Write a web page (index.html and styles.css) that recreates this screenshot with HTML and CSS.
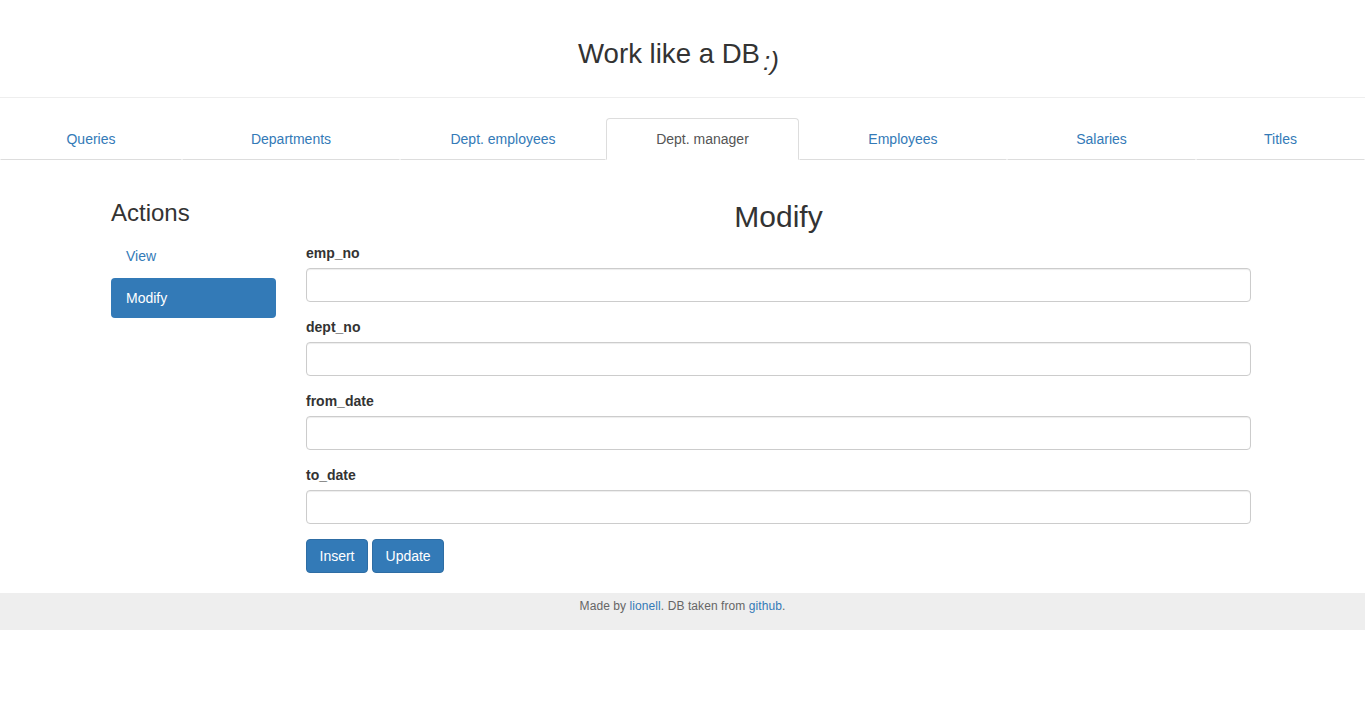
FILE: index.html
```html
<!DOCTYPE html>
<html lang="en">
<head>
<meta charset="utf-8">
<title>Work like a DB</title>
<link rel="stylesheet" href="styles.css">
</head>
<body>
<header class="page-header">
  <h1 class="title">Work like a DB<span class="smile">:)</span></h1>
</header>
<nav class="tabs">
  <a class="tab" href="#">Queries</a>
  <a class="tab" href="#">Departments</a>
  <a class="tab" href="#">Dept. employees</a>
  <a class="tab active" href="#">Dept. manager</a>
  <a class="tab" href="#">Employees</a>
  <a class="tab" href="#">Salaries</a>
  <a class="tab" href="#">Titles</a>
</nav>
<main class="container">
  <aside class="sidebar">
    <h3 class="side-title">Actions</h3>
    <ul class="pills">
      <li><a class="pill" href="#">View</a></li>
      <li><a class="pill active" href="#">Modify</a></li>
    </ul>
  </aside>
  <section class="content">
    <h2 class="content-title">Modify</h2>
    <form class="form">
      <div class="form-group">
        <label class="label">emp_no</label>
        <input class="input" type="text">
      </div>
      <div class="form-group">
        <label class="label">dept_no</label>
        <input class="input" type="text">
      </div>
      <div class="form-group">
        <label class="label">from_date</label>
        <input class="input" type="text">
      </div>
      <div class="form-group">
        <label class="label">to_date</label>
        <input class="input" type="text">
      </div>
      <div class="buttons">
        <button class="btn" type="button">Insert</button>
        <button class="btn" type="button">Update</button>
      </div>
    </form>
  </section>
</main>
<footer class="footer">
  <p class="footer-text">Made by <a href="#">lionell</a>. DB taken from <a href="#">github</a>.</p>
</footer>
</body>
</html>
```

FILE: styles.css
```css
* { box-sizing: border-box; }
html, body { margin: 0; padding: 0; }
body {
  font-family: "Liberation Sans", Arial, Helvetica, sans-serif;
  font-size: 14px;
  line-height: 1.42857;
  color: #333;
  background: #fff;
}
a { color: #337ab7; text-decoration: none; }

.page-header {
  padding: 38px 0 28px;
  border-bottom: 1px solid #eee;
  text-align: center;
}
.title {
  margin: 0;
  font-size: 27.6px;
  font-weight: 500;
  line-height: 31px;
  color: #333;
}
.smile {
  display: inline-block;
  font-size: 26px;
  font-style: italic;
  margin-left: 3px;
  margin-right: -6px;
  padding-right: 14px;
  position: relative;
  top: 7px;
  line-height: 1;
}

.tabs {
  margin-top: 20px;
  display: grid;
  grid-template-columns: 182px 218px 206px 193px 208px 189px 169px;
}
.tab {
  display: block;
  text-align: center;
  padding: 10px 15px;
  line-height: 20px;
  border: 1px solid transparent;
  border-bottom-color: #ddd;
  border-radius: 4px 4px 0 0;
  color: #337ab7;
}
.tab.active {
  color: #555;
  border-color: #ddd #ddd #fff;
}

.container {
  width: 1173px;
  margin: 0 auto;
  padding-top: 20px;
  display: flex;
}
.sidebar {
  width: 195px;
  padding: 0 15px;
  flex: none;
}
.side-title {
  margin: 20px 0 10px;
  font-size: 24px;
  font-weight: 500;
  line-height: 26.4px;
}
.pills {
  list-style: none;
  margin: 0;
  padding: 0;
}
.pills li + li { margin-top: 2px; }
.pill {
  display: block;
  padding: 10px 15px;
  line-height: 20px;
  border-radius: 4px;
}
.pill.active {
  background: #337ab7;
  color: #fff;
}

.content {
  width: 975px;
  padding: 0 15px;
  flex: none;
}
.content-title {
  margin: 20px 0 10px;
  text-align: center;
  font-size: 30px;
  font-weight: 500;
  line-height: 33px;
}
.form-group { margin-bottom: 15px; }
.label {
  display: inline-block;
  margin-bottom: 5px;
  font-weight: 700;
  line-height: 20px;
}
.input {
  display: block;
  width: 100%;
  height: 34px;
  padding: 6px 12px;
  font: inherit;
  color: #555;
  background: #fff;
  border: 1px solid #ccc;
  border-radius: 4px;
  box-shadow: inset 0 1px 1px rgba(0,0,0,.075);
}
.buttons {
  display: flex;
  gap: 4px;
  padding-bottom: 20px;
}
.btn {
  font: inherit;
  line-height: 20px;
  padding: 6px 12.5px;
  color: #fff;
  background: #337ab7;
  border: 1px solid #2e6da4;
  border-radius: 4px;
  cursor: pointer;
}

.footer {
  background: #eee;
  padding: 5px 0;
  text-align: center;
}
.footer-text {
  margin: 0 0 10px;
  font-size: 12px;
  line-height: 17px;
  letter-spacing: 0.08px;
  color: #666;
}
```
